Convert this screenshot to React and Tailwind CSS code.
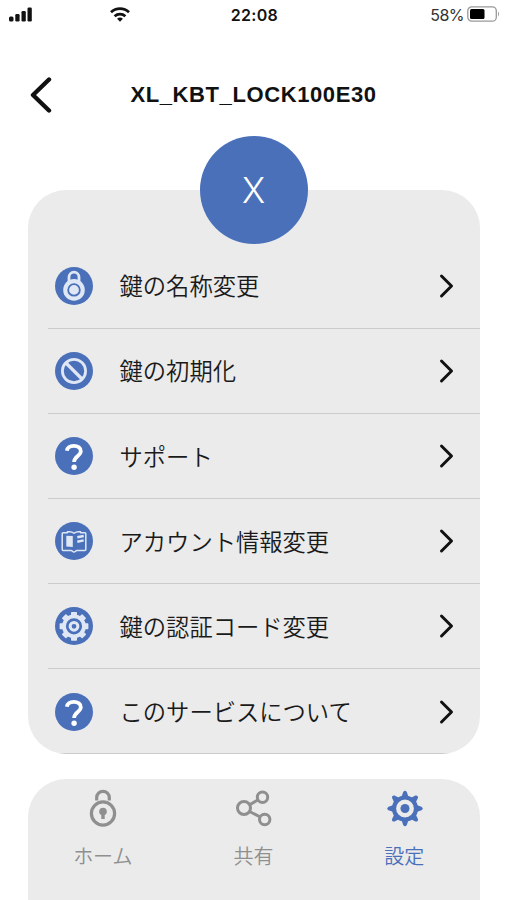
const BLUE = '#4a70ba';
const LIGHT = '#dfe7f5';

function Badge({ children }) {
  return (
    <svg className="w-[38px] h-[38px] flex-shrink-0" viewBox="0 0 38 38" fill="none">
      <circle cx="19" cy="19" r="19" fill={BLUE} />
      {children}
    </svg>
  );
}

function LockBadge() {
  return (
    <Badge>
      <path d="M14 17V10.200a5 5 0 0 1 10 0V17" stroke={LIGHT} strokeWidth="2.800" />
      <circle cx="19" cy="22.900" r="10.800" fill={LIGHT} />
      <circle cx="19" cy="22.900" r="5.800" stroke={BLUE} strokeWidth="1.800" />
    </Badge>
  );
}

function BanBadge() {
  return (
    <Badge>
      <circle cx="19" cy="19" r="11.600" stroke={LIGHT} strokeWidth="2.800" />
      <path d="M11 11l16 16" stroke={LIGHT} strokeWidth="3.200" />
    </Badge>
  );
}

function HelpBadge() {
  return (
    <Badge>
      <path
        d="M11.900 13.800c.500-3.200 3.200-4.900 6.900-4.900 4.200 0 7 2 7 5.400 0 4.600-6.700 4.900-6.700 10.700"
        stroke="#fff"
        strokeWidth="3.800"
      />
      <circle cx="19.100" cy="30.300" r="2.700" fill="#fff" />
    </Badge>
  );
}

function BookBadge() {
  return (
    <Badge>
      <path
        d="M19 11.300c-2-1.800-4-1.900-6.500-1.500v1H8.200a1 1 0 0 0-1 1v15.700a1 1 0 0 0 1 1H16c1.500 0 1.500 1.400 3 1.400s1.500-1.400 3-1.400h7.800a1 1 0 0 0 1-1V11.800a1 1 0 0 0-1-1h-4.300v-1c-2.500-.4-4.500-.3-6.500 1.500z"
        stroke={LIGHT}
        strokeWidth="1.500"
        strokeLinejoin="round"
      />
      <path d="M11.300 13.700l6.500.4v10.800l-6.500-.4z" fill={LIGHT} />
      <path d="M22.300 15.300l6.400-1.300M22.300 19.700l6.400-1.300" stroke={LIGHT} strokeWidth="2.400" />
    </Badge>
  );
}

const TEETH = [0, 45, 90, 135, 180, 225, 270, 315];

function GearBadge() {
  return (
    <Badge>
      <circle cx="19" cy="19.300" r="10" stroke={LIGHT} strokeWidth="3.800" />
      {TEETH.map((a) => (
        <rect key={a} x="16" y="4.900" width="6" height="4.500" rx="0.800" fill={LIGHT} transform={`rotate(${a} 19 19.300)`} />
      ))}
      <circle cx="19" cy="19.300" r="3.900" stroke={LIGHT} strokeWidth="3" />
    </Badge>
  );
}

function HomeIcon() {
  return (
    <svg className="w-9 h-10" viewBox="0 0 36 40" fill="none" stroke="currentColor" strokeWidth="3.200">
      <path d="M11.700 12.500V9.600a6.300 6.300 0 0 1 12.600 0v2.900" />
      <circle cx="18" cy="25.500" r="11.600" />
      <circle cx="18" cy="23.500" r="3.800" fill="currentColor" stroke="none" />
      <path d="M18 24.500v6.500" strokeWidth="3.400" />
    </svg>
  );
}

function ShareIcon() {
  return (
    <svg className="w-9 h-10" viewBox="0 0 36 40" fill="none" stroke="currentColor" strokeWidth="3">
      <circle cx="8" cy="20" r="6.500" />
      <circle cx="26.500" cy="9.200" r="5.200" />
      <circle cx="28.700" cy="31.500" r="5.200" />
      <path d="M13.700 16.700l8-4.700M13.500 23.500l10.800 5.500" />
    </svg>
  );
}

function SettingsIcon() {
  return (
    <svg className="w-9 h-10" viewBox="0 0 36 40" fill="none" stroke="currentColor">
      <circle cx="18" cy="20.500" r="11" strokeWidth="4.200" />
      <circle cx="18" cy="20.500" r="4.500" fill="currentColor" stroke="none" />
      {TEETH.map((a) => (
        <path key={a} d="M14.500 9L16.200 4q1.800-2.400 3.600 0L21.500 9z" fill="currentColor" stroke="none" transform={`rotate(${a} 18 20.500)`} />
      ))}
    </svg>
  );
}

const items = [
  { label: '鍵の名称変更', Icon: LockBadge },
  { label: '鍵の初期化', Icon: BanBadge },
  { label: 'サポート', Icon: HelpBadge },
  { label: 'アカウント情報変更', Icon: BookBadge },
  { label: '鍵の認証コード変更', Icon: GearBadge },
  { label: 'このサービスについて', Icon: HelpBadge },
];

const tabs = [
  { label: 'ホーム', Icon: HomeIcon },
  { label: '共有', Icon: ShareIcon },
  { label: '設定', Icon: SettingsIcon, active: true },
];

function StatusBar() {
  return (
    <div className="grid grid-cols-3 items-center h-[29px] pl-[9px] pr-[7px] text-[#111]">
      <div className="flex items-center">
        <svg className="w-[23px] h-[15px] mt-[-1px]" viewBox="0 0 23 15" fill="currentColor">
          <rect x="0" y="9.500" width="4.500" height="5" rx="1.500" />
          <rect x="6.300" y="7" width="4.300" height="7.500" rx="1.300" />
          <rect x="12.500" y="4" width="4.300" height="10.500" rx="1.300" />
          <rect x="18.500" y="0.500" width="4.300" height="14" rx="1.300" />
        </svg>
        <svg className="w-5 h-[15px] ml-[78px] mt-[-1px]" viewBox="0 0 20 15" fill="none" stroke="currentColor" strokeWidth="2.700">
          <path d="M1 5.300a13 13 0 0 1 18 0" />
          <path d="M4.600 9.300a8 8 0 0 1 10.800 0" />
          <path d="M10 14.800l-2.900-3a4 4 0 0 1 5.800 0z" fill="currentColor" stroke="none" />
        </svg>
      </div>
      <span className="text-center text-base font-semibold tracking-[0.3px]">22:08</span>
      <div className="flex items-center justify-end gap-[3px]">
        <span className="text-base tracking-[-0.5px] text-[#333]">58%</span>
        <svg className="w-[33px] h-4 mt-[-1px]" viewBox="0 0 33 16" fill="none">
          <rect x="0.800" y="0.800" width="28.500" height="14.400" rx="4" stroke="#999" strokeWidth="1.300" />
          <rect x="3" y="3" width="14.500" height="10" rx="1.500" fill="#000" />
          <path d="M31 5.500q2 2.500 0 5z" fill="#999" />
        </svg>
      </div>
    </div>
  );
}

export default function App() {
  return (
    <div className="flex flex-col w-full h-[900px] overflow-hidden bg-white font-['Inter','Noto_Sans_CJK_JP',sans-serif]">
      <StatusBar />

      <header className="grid grid-cols-[60px_1fr_60px] items-center h-[107px] pt-[25px]">
        <button className="flex justify-end pr-[1px]">
          <svg className="w-6 h-9 mr-[6px]" viewBox="0 0 24 36" fill="none" stroke="#111" strokeWidth="4.400" strokeLinecap="round" strokeLinejoin="round">
            <path d="M20 2.500L4 18l16 15.500" />
          </svg>
        </button>
        <h1 className="text-center text-[22px] leading-7 font-bold tracking-[0.600px] text-[#111] font-['Liberation_Sans',sans-serif]">XL_KBT_LOCK100E30</h1>
      </header>

      <main className="flex flex-col items-center">
        <div className="z-10 flex items-center justify-center w-[108px] h-[108px] -mb-[54px] ml-px rounded-full bg-[#4a70ba] text-white text-[35px] leading-none">
          <span className="mr-px font-[350]">X</span>
        </div>
        <ul className="w-[452px] h-[564px] mr-[-1px] pt-[53.500px] rounded-[38px] overflow-hidden bg-[#ebebeb]">
          {items.map(({ label, Icon }) => (
            <li key={label} className="flex items-center h-[85.100px] ml-5 pt-px pl-[6.500px] pr-[23px] border-b border-[#cbcbcb]">
              <Icon />
              <span className="flex-1 ml-[27px] text-[23.300px] leading-none font-[350] text-[#1a1a1a] font-['Noto_Sans_CJK_JP',sans-serif]">{label}</span>
              <svg className="w-[20px] h-7" viewBox="0 0 20 28" fill="none" stroke="#111" strokeWidth="3" strokeLinecap="round" strokeLinejoin="round">
                <path d="M4.500 4L14.500 14 4.500 24" />
              </svg>
            </li>
          ))}
        </ul>
      </main>

      <nav className="grid grid-cols-3 flex-1 w-[452px] mt-[25px] ml-7 rounded-t-[38px] bg-[#ebebeb]">
        {tabs.map(({ label, Icon, active }) => (
          <a key={label} className={active ? 'flex flex-col items-center pt-[9px] text-[#4a70ba]' : 'flex flex-col items-center pt-[9px] text-[#8f8f8f]'}>
            <Icon />
            <span className="mt-[18px] mr-px text-[20px] leading-5 font-[350] font-['Noto_Sans_CJK_JP',sans-serif]">{label}</span>
          </a>
        ))}
      </nav>
    </div>
  );
}
